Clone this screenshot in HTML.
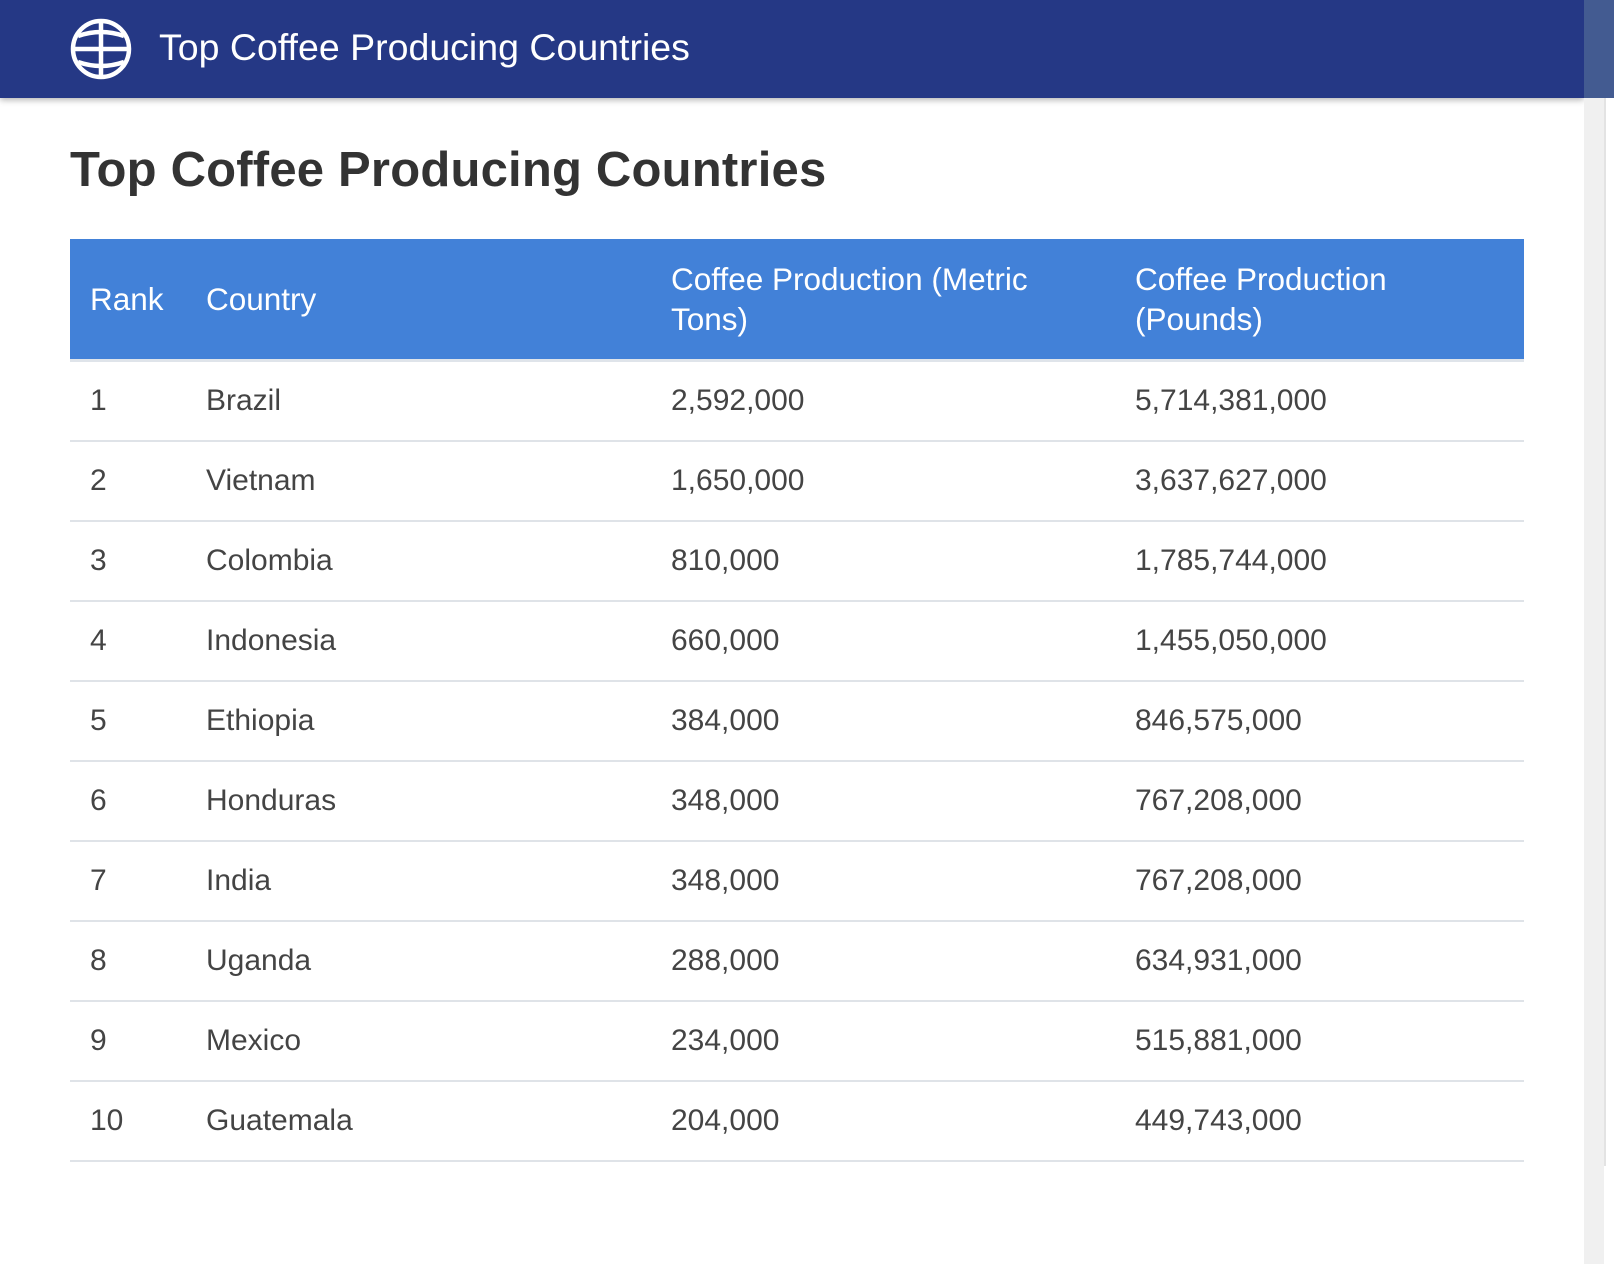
<!DOCTYPE html>
<html><head><meta charset="utf-8"><style>
body{margin:0;width:1614px;height:1166px;overflow:hidden;background:#fff;font-family:"Liberation Sans",sans-serif;color:#444;position:relative}
.top{position:absolute;left:0;top:0;width:1584px;height:98px;background:#253885;box-shadow:0 2px 6px rgba(0,0,0,.3)}
.top span{position:absolute;left:159px;top:26px;font-size:37.5px;color:#fff}
.sb{position:absolute;left:1584px;top:0;width:20px;height:1166px;background:#f0f0f0}
.sbt{position:absolute;left:1584px;top:0;width:30px;height:98px;background:#435b91}
.edge{position:absolute;left:1604px;top:98px;width:10px;height:1068px;background:#fff;border-left:2px solid #e3e3e3}
h1{position:absolute;left:70px;top:142px;margin:0;font-size:49px;font-weight:bold;color:#333;letter-spacing:.2px}
.th{position:absolute;left:70px;top:239px;width:1454px;height:120px;background:#4281d8;color:#fff;font-size:31.5px;border-bottom:3px solid #dfe4ea}
.th div{position:absolute;line-height:40px}
.row{position:absolute;left:70px;width:1454px;height:78px;border-bottom:2px solid #dfe3e8;font-size:30px}
.row div,.th div{position:absolute}
.row div{top:22px}
.a{left:20px}.b{left:136px}.c{left:601px}.d{left:1065px}
</style></head><body>
<div class="top">
<svg style="position:absolute;left:69px;top:17px" width="64" height="64" viewBox="0 0 64 64" fill="none" stroke="#fff" stroke-width="4.5"><circle cx="32" cy="32" r="28"/><line x1="32" y1="4" x2="32" y2="60"/><line x1="4" y1="32" x2="60" y2="32"/><path d="M9 19 Q32 11 55 19"/><path d="M9 45 Q32 53 55 45"/></svg>
<span>Top Coffee Producing Countries</span></div>
<div class="sbt"></div><div class="sb" style="top:98px"></div><div class="edge"></div>
<h1>Top Coffee Producing Countries</h1>
<div class="th"><div class="a" style="top:40px">Rank</div><div class="b" style="top:40px">Country</div><div class="c" style="top:20px">Coffee Production (Metric<br>Tons)</div><div class="d" style="top:20px">Coffee Production<br>(Pounds)</div></div>
<div class="row" style="top:362px"><div class="a">1</div><div class="b">Brazil</div><div class="c">2,592,000</div><div class="d">5,714,381,000</div></div>
<div class="row" style="top:442px"><div class="a">2</div><div class="b">Vietnam</div><div class="c">1,650,000</div><div class="d">3,637,627,000</div></div>
<div class="row" style="top:522px"><div class="a">3</div><div class="b">Colombia</div><div class="c">810,000</div><div class="d">1,785,744,000</div></div>
<div class="row" style="top:602px"><div class="a">4</div><div class="b">Indonesia</div><div class="c">660,000</div><div class="d">1,455,050,000</div></div>
<div class="row" style="top:682px"><div class="a">5</div><div class="b">Ethiopia</div><div class="c">384,000</div><div class="d">846,575,000</div></div>
<div class="row" style="top:762px"><div class="a">6</div><div class="b">Honduras</div><div class="c">348,000</div><div class="d">767,208,000</div></div>
<div class="row" style="top:842px"><div class="a">7</div><div class="b">India</div><div class="c">348,000</div><div class="d">767,208,000</div></div>
<div class="row" style="top:922px"><div class="a">8</div><div class="b">Uganda</div><div class="c">288,000</div><div class="d">634,931,000</div></div>
<div class="row" style="top:1002px"><div class="a">9</div><div class="b">Mexico</div><div class="c">234,000</div><div class="d">515,881,000</div></div>
<div class="row" style="top:1082px"><div class="a">10</div><div class="b">Guatemala</div><div class="c">204,000</div><div class="d">449,743,000</div></div>
</body></html>
